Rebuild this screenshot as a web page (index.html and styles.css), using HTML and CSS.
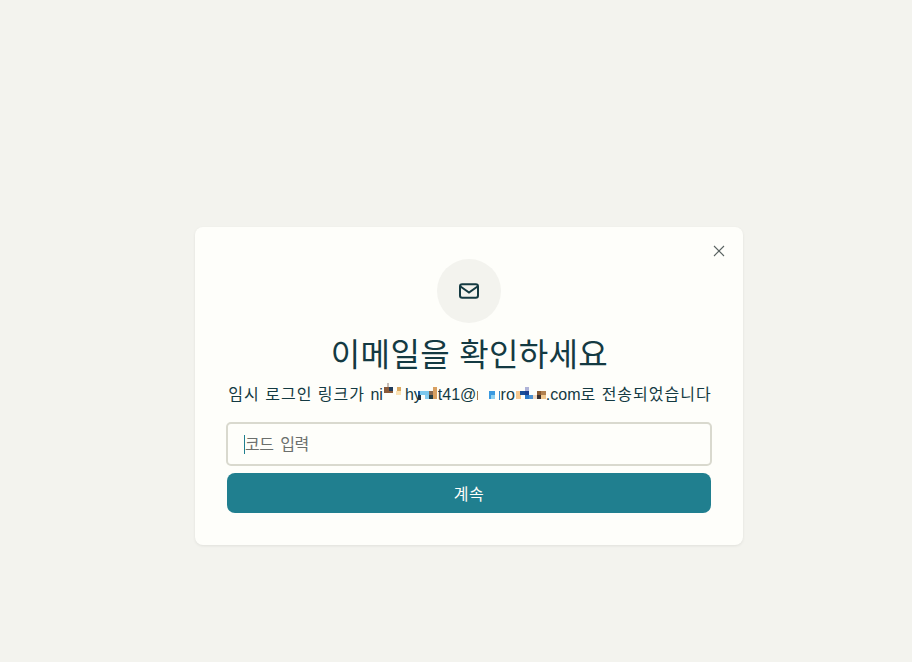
FILE: index.html
```html
<!doctype html>
<html lang="ko">
<head>
<meta charset="utf-8">
<title>이메일을 확인하세요</title>
<link rel="stylesheet" href="styles.css">
</head>

<body>
<div class="modal">
	<button class="closeBtn" aria-label="닫기">
		<svg width="12" height="12" viewBox="0 0 12 12"><path d="M1 1L11 11M11 1L1 11" fill="none" stroke="#5a6361" stroke-width="1.1"/></svg>
	</button>
	<div class="iconCircle">
		<svg width="20" height="16" viewBox="0 0 20 16"><rect x="1" y="1.2" width="18" height="13.6" rx="2.2" fill="none" stroke="#143a42" stroke-width="2"/><path d="M1.5 3.5L10 9.5L18.5 3.5" fill="none" stroke="#143a42" stroke-width="2"/></svg>
	</div>
	<h1 class="title">이메일을 확인하세요</h1>
	<p class="desc"><span class="ko">임시 로그인 링크가 </span>ni<svg class="mosaic" width="22" height="17" viewBox="382 382 22 17" shape-rendering="crispEdges">
		<rect x="382" y="382" width="22" height="17" fill="#fefefa"/>
		<rect x="386" y="382" width="2" height="4" fill="#c8bdb5"/>
		<rect x="383" y="386" width="9" height="6" fill="#8a5a3a"/>
		<rect x="388" y="386" width="4" height="4" fill="#1e3a5a"/>
		<rect x="396" y="386" width="4" height="4" fill="#d9a860"/>
		<rect x="395" y="390" width="5" height="4" fill="#fde3b5"/>
	</svg>hy<svg class="mosaic mosaicB" width="20" height="13" viewBox="417 386 20 13" shape-rendering="crispEdges">
		<rect x="417" y="386" width="20" height="13" fill="#fefefa"/>
		<rect x="417" y="390" width="2" height="4" fill="#1e5aa0"/>
		<rect x="419" y="390" width="9" height="4" fill="#7cc8ee"/>
		<rect x="417" y="394" width="3" height="5" fill="#203040"/>
		<rect x="424" y="394" width="4" height="4" fill="#87cdf0"/>
		<rect x="428" y="390" width="4" height="4" fill="#8a6a50"/>
		<rect x="428" y="394" width="4" height="4" fill="#253f45"/>
		<rect x="432" y="386" width="4" height="12" fill="#d9a060"/>
	</svg>t41@n<svg class="mosaic mosaicC" width="21" height="17" viewBox="477 382 21 17" shape-rendering="crispEdges">
		<rect x="477" y="382" width="21" height="17" fill="#fefefa"/>
		<rect x="488" y="390" width="6" height="4" fill="#3a9ae0"/>
		<rect x="488" y="394" width="2" height="4" fill="#3a9ae0"/>
		<rect x="490" y="394" width="4" height="4" fill="#8cd0f0"/>
	</svg>uro<svg class="mosaic" width="31" height="17" viewBox="514 382 31 17" shape-rendering="crispEdges">
		<rect x="514" y="382" width="31" height="17" fill="#fefefa"/>
		<rect x="515" y="390" width="5" height="8" fill="#f5c890"/>
		<rect x="519" y="390" width="5" height="4" fill="#1a4f9a"/>
		<rect x="524" y="386" width="4" height="4" fill="#b0b4d8"/>
		<rect x="524" y="390" width="4" height="4" fill="#1a3f90"/>
		<rect x="524" y="394" width="4" height="4" fill="#2a78c8"/>
		<rect x="528" y="394" width="4" height="4" fill="#4a90d0"/>
		<rect x="532" y="394" width="4" height="4" fill="#f0d8c0"/>
		<rect x="536" y="390" width="4" height="4" fill="#8a5a30"/>
		<rect x="536" y="394" width="4" height="4" fill="#3a3030"/>
		<rect x="540" y="390" width="5" height="4" fill="#b08050"/>
		<rect x="540" y="394" width="5" height="4" fill="#f0c890"/>
	</svg>.com<span class="ko">로 전송되었습니다</span></p>
	<div class="codeInput"><span class="caret"></span><span class="placeholder">코드 입력</span></div>
	<button class="submitBtn">계속</button>
</div>
</body>
</html>
```

FILE: styles.css
```css
*{
	box-sizing: border-box;
}

body{
	margin: 0;
	min-height: 662px;
	padding-top: 227px;
	background: #f3f3ee;
	font-family: "Liberation Sans", "Noto Sans CJK KR", sans-serif;
	color: #143a42;
}

.modal{
	position: relative;
	width: 548px;
	height: 318px;
	margin-left: 195px;
	padding: 32px;
	display: flex;
	flex-direction: column;
	align-items: center;
	background: #fefefa;
	border-radius: 8px;
	box-shadow: 0 1px 3px rgba(0,0,0,0.08);
}

.closeBtn{
	position: absolute;
	top: 18px;
	right: 18px;
	width: 12px;
	height: 12px;
	padding: 0;
	border: 0;
	background: none;
	display: flex;
}

.iconCircle{
	width: 64px;
	height: 64px;
	border-radius: 50%;
	background: #f3f3ee;
	display: flex;
	align-items: center;
	justify-content: center;
}

.title{
	margin: 10px 0 0 1px;
	font-size: 32px;
	line-height: 44px;
	font-weight: 400;
	letter-spacing: 0.35px;
}

.desc{
	margin: 6px 0 0 2px;
	font-size: 16px;
	line-height: 24px;
	white-space: nowrap;
}

.ko{
	letter-spacing: 1px;
}

.mosaic{
	display: inline-block;
	position: relative;
}

.mosaicB{
	margin-left: -4px;
}

.mosaicC{
	margin-left: -7px;
	margin-right: -7.5px;
}

.codeInput{
	width: 486px;
	height: 44px;
	margin-top: 15px;
	padding-left: 16px;
	display: flex;
	align-items: center;
	flex-shrink: 0;
	border: 2px solid #d9d9ce;
	border-radius: 5px;
	background: #fefefa;
	font-size: 16px;
}

.caret{
	width: 1px;
	height: 19px;
	background: #1f7f8f;
}

.placeholder{
	margin-bottom: 3px;
	color: #6b6f6c;
	letter-spacing: -0.4px;
	word-spacing: 2.5px;
}

.submitBtn{
	width: 484px;
	height: 40px;
	margin-top: 7px;
	flex-shrink: 0;
	border: 0;
	border-radius: 8px;
	background: #207f8f;
	color: #fefefa;
	font-family: inherit;
	font-size: 16px;
	letter-spacing: 0.5px;
}
```
